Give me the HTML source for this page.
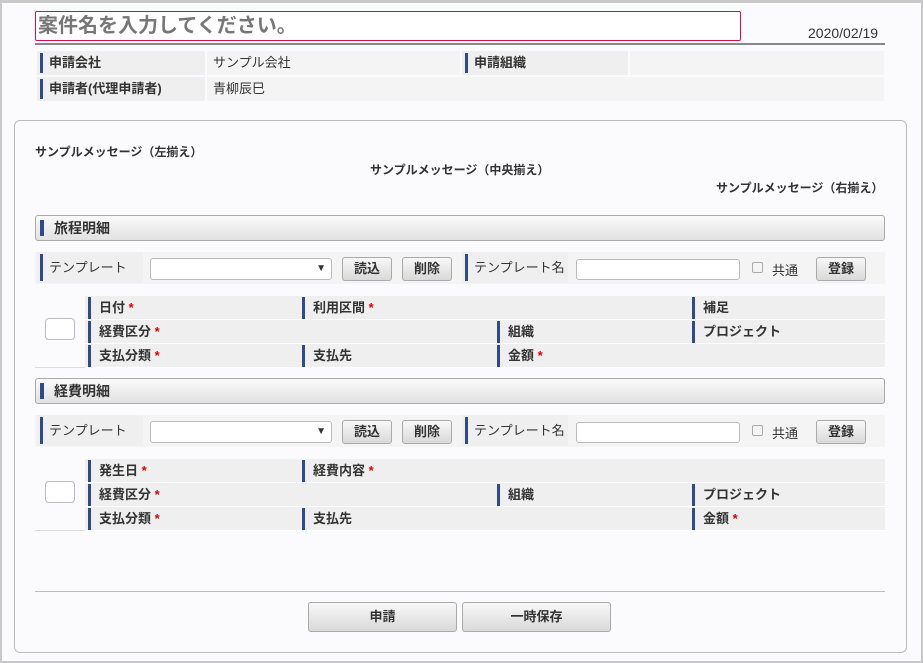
<!DOCTYPE html><html><head><meta charset="utf-8"><style>
*{box-sizing:border-box;margin:0;padding:0}
body{width:923px;height:663px;background:#fbfbfd;font-family:"Liberation Sans","Noto Sans CJK JP",sans-serif;font-size:13px;color:#333;position:relative;overflow:hidden}
.a{position:absolute}
.frame{left:0;top:0;width:923px;height:663px;border:2px solid #c8c8c8;border-top:3px solid #c8c8c8}
.lbl{background:#efefef;font-weight:bold;padding-left:12px;line-height:24px}
.lbl:before{content:"";position:absolute;left:3px;top:2px;bottom:2px;width:3px;background:#2f4a8a}
.val{background:#f4f4f4;padding-left:6px;line-height:24px}
.sec{left:35px;width:850px;height:26px;border:1px solid #aaa;border-radius:3px;background:linear-gradient(#fafafa,#e2e2e2);font-weight:bold;font-size:14px;line-height:24px;padding-left:18px}
.sec:before{content:"";position:absolute;left:4px;top:4px;bottom:4px;width:4px;background:#2f4a8a}
.btn{border:1px solid #aaa;border-radius:3px;background:linear-gradient(#f8f8f8,#d9d9d9);text-align:center;font-weight:bold;line-height:21px}
.inp{background:#fff;border:1px solid #bbb;border-radius:3px}
.g{background:#efefef;border-bottom:1px solid #fff}
.bar{border-left:3px solid #2f4a8a;font-weight:bold;line-height:22px;padding-left:8px}
.r{color:#d00}
.cb{width:11px;height:11px;border:1px solid #aaa;border-radius:2px;background:#f4f4f4}
</style></head><body>
<div class="a frame"></div>
<div class="a inp" style="left:35px;top:11px;width:706px;height:30px;border:1px solid #d0104a;border-radius:2px;font-size:20px;font-weight:bold;color:#777;line-height:28px;padding-left:2px">案件名を入力してください。</div>
<div class="a" style="left:808px;top:25px;font-size:14px">2020/02/19</div>
<div class="a" style="left:35px;top:43px;width:850px;height:2px;background:#888"></div>
<div class="a lbl" style="left:37px;top:51px;width:168px;height:24px">申請会社</div>
<div class="a val" style="left:207px;top:51px;width:253px;height:24px">サンプル会社</div>
<div class="a lbl" style="left:462px;top:51px;width:166px;height:24px">申請組織</div>
<div class="a val" style="left:630px;top:51px;width:254px;height:24px"></div>
<div class="a lbl" style="left:37px;top:77px;width:168px;height:24px">申請者(代理申請者)</div>
<div class="a val" style="left:207px;top:77px;width:677px;height:24px">青柳辰巳</div>
<div class="a" style="left:14px;top:120px;width:893px;height:533px;border:1px solid #bbb;border-radius:6px"></div>
<div class="a" style="left:35px;top:143px;font-weight:bold;font-size:12px">サンプルメッセージ（左揃え）</div>
<div class="a" style="left:370px;top:161px;font-weight:bold;font-size:12px">サンプルメッセージ（中央揃え）</div>
<div class="a" style="left:716px;top:179px;font-weight:bold;font-size:12px">サンプルメッセージ（右揃え）</div>

<div class="a sec" style="top:215px">旅程明細</div>
<div class="a" style="left:35px;top:252px;width:850px;height:32px;background:#f4f4f4"></div>
<div class="a lbl" style="left:37px;top:252px;width:106px;height:31px;line-height:31px;font-weight:normal">テンプレート</div>
<div class="a inp" style="left:150px;top:258px;width:182px;height:22px;font-size:10px;text-align:right;padding-right:5px;line-height:20px">▼</div>
<div class="a btn" style="left:342px;top:257px;width:50px;height:24px">読込</div>
<div class="a btn" style="left:402px;top:257px;width:50px;height:24px">削除</div>
<div class="a lbl" style="left:462px;top:252px;width:106px;height:31px;line-height:31px;font-weight:normal">テンプレート名</div>
<div class="a inp" style="left:576px;top:259px;width:164px;height:21px"></div>
<div class="a cb" style="left:752px;top:262px"></div>
<div class="a" style="left:772px;top:260px">共通</div>
<div class="a btn" style="left:816px;top:257px;width:50px;height:24px">登録</div>

<div class="a" style="left:35px;top:296px;width:850px;height:72px;border-bottom:1px solid #ddd"></div>
<div class="a inp" style="left:45px;top:318px;width:30px;height:22px;border-radius:4px"></div>
<div class="a g" style="left:85px;top:296px;width:800px;height:24px"></div>
<div class="a g" style="left:85px;top:320px;width:800px;height:24px"></div>
<div class="a g" style="left:85px;top:344px;width:800px;height:24px"></div>
<div class="a bar" style="left:88px;top:297px;height:22px">日付<span class="r"> *</span></div>
<div class="a bar" style="left:302px;top:297px;height:22px">利用区間<span class="r"> *</span></div>
<div class="a bar" style="left:692px;top:297px;height:22px">補足</div>
<div class="a bar" style="left:88px;top:321px;height:22px">経費区分<span class="r"> *</span></div>
<div class="a bar" style="left:497px;top:321px;height:22px">組織</div>
<div class="a bar" style="left:692px;top:321px;height:22px">プロジェクト</div>
<div class="a bar" style="left:88px;top:345px;height:22px">支払分類<span class="r"> *</span></div>
<div class="a bar" style="left:302px;top:345px;height:22px">支払先</div>
<div class="a bar" style="left:497px;top:345px;height:22px">金額<span class="r"> *</span></div>

<div class="a sec" style="top:378px">経費明細</div>
<div class="a" style="left:35px;top:415px;width:850px;height:32px;background:#f4f4f4"></div>
<div class="a lbl" style="left:37px;top:415px;width:106px;height:31px;line-height:31px;font-weight:normal">テンプレート</div>
<div class="a inp" style="left:150px;top:421px;width:182px;height:22px;font-size:10px;text-align:right;padding-right:5px;line-height:20px">▼</div>
<div class="a btn" style="left:342px;top:420px;width:50px;height:24px">読込</div>
<div class="a btn" style="left:402px;top:420px;width:50px;height:24px">削除</div>
<div class="a lbl" style="left:462px;top:415px;width:106px;height:31px;line-height:31px;font-weight:normal">テンプレート名</div>
<div class="a inp" style="left:576px;top:422px;width:164px;height:21px"></div>
<div class="a cb" style="left:752px;top:425px"></div>
<div class="a" style="left:772px;top:423px">共通</div>
<div class="a btn" style="left:816px;top:420px;width:50px;height:24px">登録</div>

<div class="a" style="left:35px;top:459px;width:850px;height:72px;border-bottom:1px solid #ddd"></div>
<div class="a inp" style="left:45px;top:481px;width:30px;height:22px;border-radius:4px"></div>
<div class="a g" style="left:85px;top:459px;width:800px;height:24px"></div>
<div class="a g" style="left:85px;top:483px;width:800px;height:24px"></div>
<div class="a g" style="left:85px;top:507px;width:800px;height:24px"></div>
<div class="a bar" style="left:88px;top:460px;height:22px">発生日<span class="r"> *</span></div>
<div class="a bar" style="left:302px;top:460px;height:22px">経費内容<span class="r"> *</span></div>
<div class="a bar" style="left:88px;top:484px;height:22px">経費区分<span class="r"> *</span></div>
<div class="a bar" style="left:497px;top:484px;height:22px">組織</div>
<div class="a bar" style="left:692px;top:484px;height:22px">プロジェクト</div>
<div class="a bar" style="left:88px;top:508px;height:22px">支払分類<span class="r"> *</span></div>
<div class="a bar" style="left:302px;top:508px;height:22px">支払先</div>
<div class="a bar" style="left:692px;top:508px;height:22px">金額<span class="r"> *</span></div>

<div class="a" style="left:35px;top:591px;width:850px;height:1px;background:#bbb"></div>
<div class="a btn" style="left:308px;top:602px;width:149px;height:30px;line-height:28px">申請</div>
<div class="a btn" style="left:462px;top:602px;width:149px;height:30px;line-height:28px">一時保存</div>
</body></html>
